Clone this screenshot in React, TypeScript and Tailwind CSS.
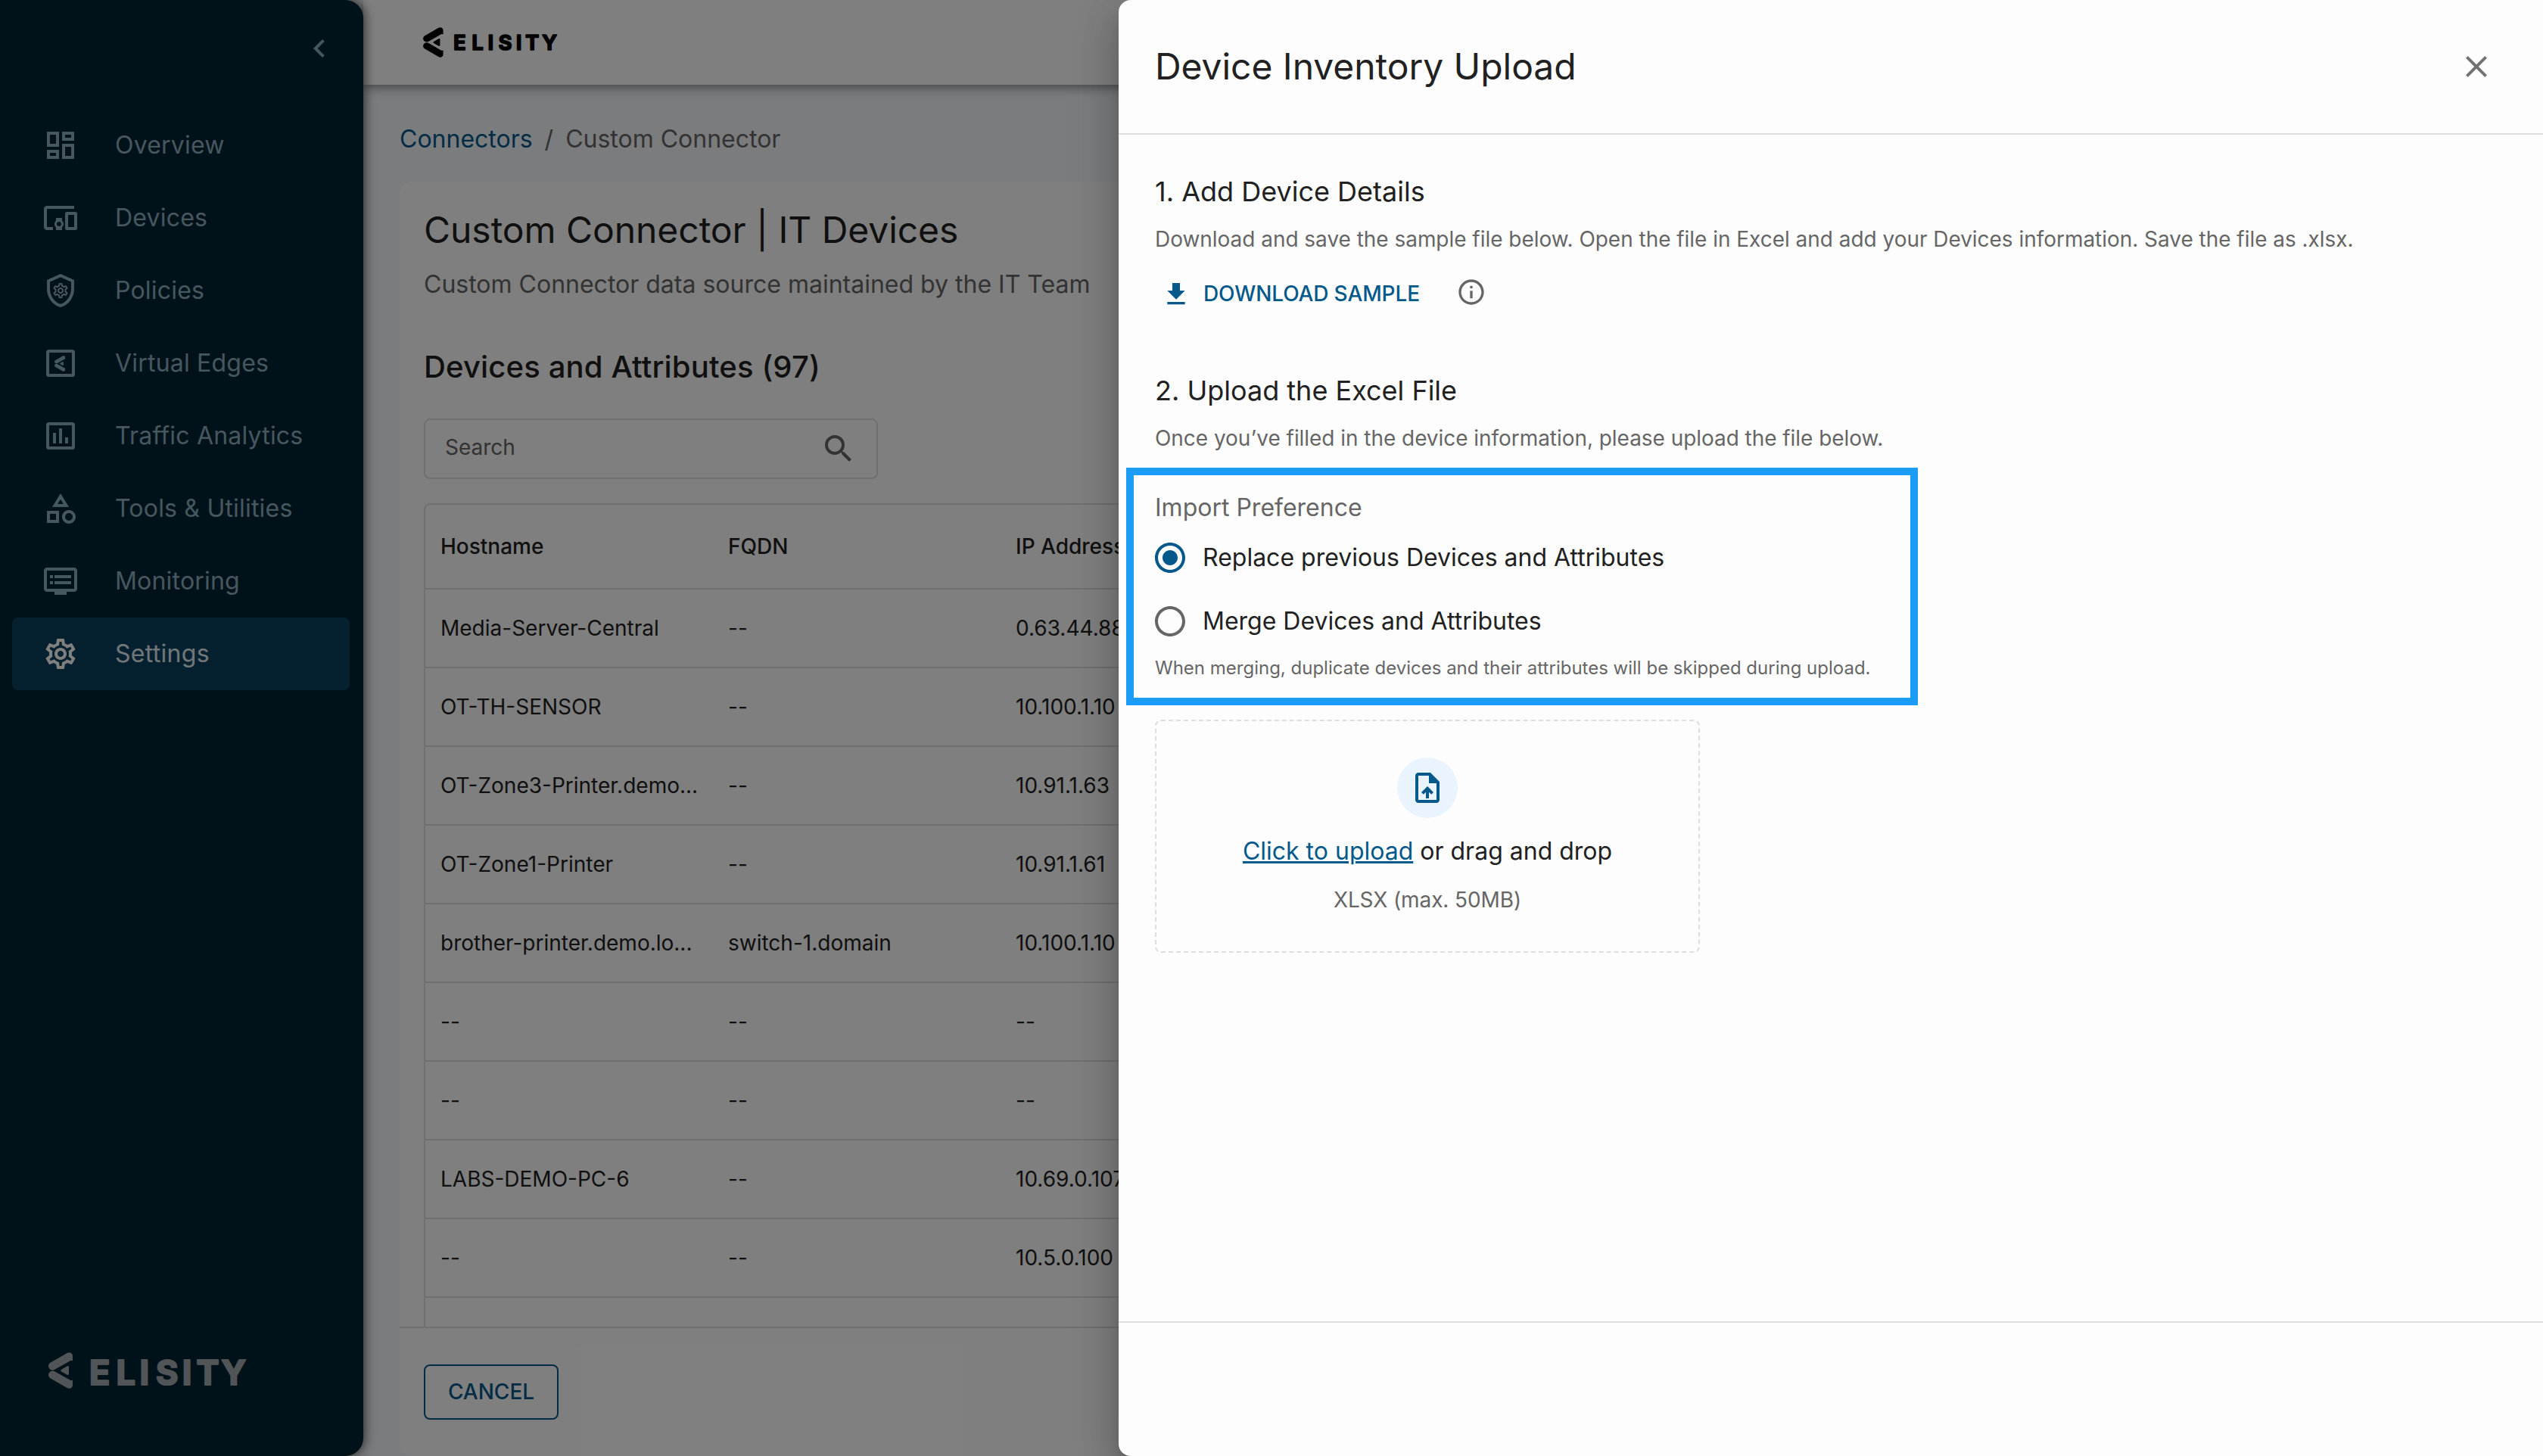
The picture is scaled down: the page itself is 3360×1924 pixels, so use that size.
import React from 'react';
import type { IconType } from 'react-icons';
import {
  MdChevronLeft,
  MdClose,
  MdDevicesOther,
  MdDownload,
  MdDvr,
  MdInfoOutline,
  MdOutlineCategory,
  MdOutlineSettings,
  MdRadioButtonChecked,
  MdRadioButtonUnchecked,
  MdSearch,
} from 'react-icons/md';

type IconProps = { className?: string };

const DashboardIcon = ({ className }: IconProps) => (
  <svg viewBox="0 0 24 24" fill="none" stroke="currentColor" strokeWidth="2" className={className}>
    <path d="M4 4h6v8H4zM14 4h6v4h-6zM14 12h6v8h-6zM4 16h6v4H4z" />
  </svg>
);

const PolicyIcon = ({ className }: IconProps) => (
  <svg viewBox="0 0 24 24" fill="currentColor" className={className}>
    <path d="M12 1L3 5v6c0 5.55 3.84 10.74 9 12 5.16-1.26 9-6.45 9-12V5l-9-4zm0 2.18l7 3.12v4.7c0 4.52-2.98 8.69-7 9.93-4.02-1.24-7-5.41-7-9.93V6.3l7-3.12z" />
    <g transform="translate(6 6) scale(0.5)">
      <path d="M19.43 12.98c.04-.32.07-.64.07-.98 0-.34-.03-.66-.07-.98l2.11-1.65c.19-.15.24-.42.12-.64l-2-3.46c-.09-.16-.26-.25-.44-.25-.06 0-.12.01-.17.03l-2.49 1c-.52-.4-1.08-.73-1.69-.98l-.38-2.65C14.46 2.18 14.25 2 14 2h-4c-.25 0-.46.18-.49.42l-.38 2.65c-.61.25-1.17.59-1.69.98l-2.49-1c-.06-.02-.12-.03-.18-.03-.17 0-.34.09-.43.25l-2 3.46c-.13.22-.07.49.12.64l2.11 1.65c-.04.32-.07.65-.07.98 0 .33.03.66.07.98l-2.11 1.65c-.19.15-.24.42-.12.64l2 3.46c.09.16.26.25.44.25.06 0 .12-.01.17-.03l2.49-1c.52.4 1.08.73 1.69.98l.38 2.65c.03.24.24.42.49.42h4c.25 0 .46-.18.49-.42l.38-2.65c.61-.25 1.17-.59 1.69-.98l2.49 1c.06.02.12.03.18.03.17 0 .34-.09.43-.25l2-3.46c.12-.22.07-.49-.12-.64l-2.11-1.65zm-1.98-1.71c.04.31.05.52.05.73 0 .21-.02.43-.05.73l-.14 1.13.89.7 1.08.84-.7 1.21-1.27-.51-1.04-.42-.9.68c-.43.32-.84.56-1.25.73l-1.06.43-.16 1.13-.2 1.35h-1.4l-.19-1.35-.16-1.13-1.06-.43c-.43-.18-.83-.41-1.23-.71l-.91-.7-1.06.43-1.27.51-.7-1.21 1.08-.84.89-.7-.14-1.13c-.03-.31-.05-.54-.05-.74s.02-.43.05-.73l.14-1.13-.89-.7-1.08-.84.7-1.21 1.27.51 1.04.42.9-.68c.43-.32.84-.56 1.25-.73l1.06-.43.16-1.13.2-1.35h1.39l.19 1.35.16 1.13 1.06.43c.43.18.83.41 1.23.71l.91.7 1.06-.43 1.27-.51.7 1.21-1.07.85-.89.7.14 1.13zM12 8c-2.21 0-4 1.79-4 4s1.79 4 4 4 4-1.79 4-4-1.79-4-4-4zm0 6c-1.1 0-2-.9-2-2s.9-2 2-2 2 .9 2 2-.9 2-2 2z" />
    </g>
  </svg>
);

const EdgeIcon = ({ className }: IconProps) => (
  <svg viewBox="0 0 24 24" className={className}>
    <rect x="3.5" y="4" width="17" height="16" rx="0.8" fill="none" stroke="currentColor" strokeWidth="2" />
    <g transform="translate(8 7) scale(0.2188)" fill="currentColor">
      <MarkPaths />
    </g>
  </svg>
);

const AnalyticsIcon = ({ className }: IconProps) => (
  <svg viewBox="0 0 24 24" className={className}>
    <rect x="3.5" y="4" width="17" height="16" rx="0.8" fill="none" stroke="currentColor" strokeWidth="2" />
    <path d="M7 10h2v7H7zM11 7h2v10h-2zM15 13h2v4h-2z" fill="currentColor" />
  </svg>
);

const UploadFileIcon = ({ className }: IconProps) => (
  <svg viewBox="0 0 24 24" fill="currentColor" className={className}>
    <path d="M14 2H6c-1.1 0-1.99.9-1.99 2L4 20c0 1.1.89 2 1.99 2H18c1.1 0 2-.9 2-2V8l-6-6zm4 18H6V4h7v5h5v11zM8 15.01l1.41 1.41L11 14.84V19h2v-4.16l1.59 1.59L16 15.01 12.01 11 8 15.01z" />
  </svg>
);

// Brand mark, drawn on a 32x48 box
const MarkPaths = () => (
  <>
    <path d="M24.6 1C28 -1 32 1 32 5V11.5C31 10.6 30 10.5 28.8 11.2L8.8 22.6C6 24.2 2.6 23.5 0.9 20.9C-0.7 18.2 0 15.2 2.8 13.6Z" />
    <path d="M24.6 47C28 49 32 47 32 43V36.5C31 37.4 30 37.5 28.8 36.8L8.8 25.4C6 23.8 2.6 24.5 0.9 27.1C-0.7 29.8 0 32.8 2.8 34.4Z" />
    <path d="M17 22.8L24.8 18.3C26 17.7 27 18.3 27 19.5V28.5C27 29.7 26 30.3 24.8 29.7L17 25.2C15.9 24.5 15.9 23.5 17 22.8Z" />
  </>
);

const SidebarLogo = () => (
  <svg viewBox="0 0 280 48" className="h-12 w-[280px] overflow-visible text-[#a4aaae]" fill="currentColor">
    <MarkPaths />
    <text
      x="54 89.4 120.6 142 176.8 195.6 228.2"
      y="42.8"
      className="font-['Inter',sans-serif] text-[45px] font-bold"
      stroke="currentColor"
      strokeWidth="2.2"
      strokeLinejoin="round"
    >
      ELISITY
    </text>
  </svg>
);

const HeaderLogo = () => (
  <svg viewBox="0 0 180 40" className="h-10 w-[180px] overflow-visible text-black" fill="currentColor">
    <g transform="scale(0.83)">
      <MarkPaths />
    </g>
    <text
      x="40 64.2 85.4 99.4 122.8 135 157"
      y="30.2"
      className="font-['Inter',sans-serif] text-[27.5px] font-bold"
      stroke="currentColor"
      strokeWidth="1.5"
      strokeLinejoin="round"
    >
      ELISITY
    </text>
  </svg>
);

type NavItem = {
  label: string;
  icon: IconType | ((props: IconProps) => React.JSX.Element);
  active?: boolean;
};

const navItems: NavItem[] = [
  { label: 'Overview', icon: DashboardIcon },
  { label: 'Devices', icon: MdDevicesOther },
  { label: 'Policies', icon: PolicyIcon },
  { label: 'Virtual Edges', icon: EdgeIcon },
  { label: 'Traffic Analytics', icon: AnalyticsIcon },
  { label: 'Tools & Utilities', icon: MdOutlineCategory },
  { label: 'Monitoring', icon: MdDvr },
  { label: 'Settings', icon: MdOutlineSettings, active: true },
];

const rows = [
  ['Media-Server-Central', '--', '0.63.44.88'],
  ['OT-TH-SENSOR', '--', '10.100.1.10'],
  ['OT-Zone3-Printer.demo...', '--', '10.91.1.63'],
  ['OT-Zone1-Printer', '--', '10.91.1.61'],
  ['brother-printer.demo.lo...', 'switch-1.domain', '10.100.1.10'],
  ['--', '--', '--'],
  ['--', '--', '--'],
  ['LABS-DEMO-PC-6', '--', '10.69.0.107'],
  ['--', '--', '10.5.0.100'],
];

const Sidebar = () => (
  <aside className="relative z-20 flex w-[480px] shrink-0 flex-col rounded-r-3xl bg-[#002432] text-[#8eaebe] shadow-[0_0_16px_rgba(0,0,0,0.8)]">
    <div className="flex h-36 justify-end pt-10 pr-[34px]">
      <MdChevronLeft className="size-12" />
    </div>
    <nav className="mr-[18px] ml-4">
      {navItems.map(({ label, icon: Icon, active }) => (
        <div
          key={label}
          className={
            active
              ? 'flex h-24 items-center gap-12 rounded-lg bg-[#0a425e] pl-10'
              : 'flex h-24 items-center gap-12 pl-10'
          }
        >
          <Icon className={active ? 'size-12 text-white' : 'size-12'} />
          <span className={active ? 'text-[32px] tracking-[0.3px] text-[#e2ecf0]' : 'text-[32px] tracking-[0.2px]'}>
            {label}
          </span>
        </div>
      ))}
    </nav>
    <div className="mt-auto pb-[89px] pl-16">
      <SidebarLogo />
    </div>
  </aside>
);

const DeviceTable = () => (
  <div className="mt-8 rounded-t-lg border-2 border-b-0 border-[#e0e0e0] text-[28px]">
    <div className="flex h-28 items-center border-b-2 border-[#e0e0e0] pl-5 font-medium">
      <div className="w-[380px]">Hostname</div>
      <div className="w-[380px]">FQDN</div>
      <div className="w-[380px]">IP Address</div>
    </div>
    {rows.map(([hostname, fqdn, ip], i) => (
      <div key={i} className="flex h-[104px] items-center border-b-2 border-[#e0e0e0] pl-5">
        <div className="w-[380px]">{hostname}</div>
        <div className="w-[380px]">{fqdn}</div>
        <div className="w-[380px]">{ip}</div>
      </div>
    ))}
    <div className="h-[104px]" />
  </div>
);

const ConnectorPage = () => (
  <div className="flex min-w-0 flex-1 flex-col">
    <header className="relative z-10 flex h-28 shrink-0 items-start bg-white pt-9 pl-[79px] shadow-[0_4px_8px_-2px_rgba(0,0,0,0.2),0_8px_10px_0_rgba(0,0,0,0.14),0_2px_20px_0_rgba(0,0,0,0.12)]">
      <HeaderLogo />
    </header>
    <div className="flex h-32 shrink-0 items-center gap-4 pt-4 pl-12 text-[32px] text-[#666]">
      <span className="text-[#04598a]">Connectors</span>
      <span>/</span>
      <span>Custom Connector</span>
    </div>
    <div className="mx-12 flex min-h-0 flex-1 flex-col rounded-2xl bg-white">
      <div className="min-h-0 flex-1 overflow-hidden px-8 pt-8">
        <h1 className="text-[48px] leading-[64px] tracking-[-0.05px]">Custom Connector | IT Devices</h1>
        <p className="mt-4 text-[32px] leading-[48px] text-[#666]">
          Custom Connector data source maintained by the IT Team
        </p>
        <h2 className="mt-[57px] text-[40px] leading-[56px] font-medium tracking-[0.15px]">
          Devices and Attributes (97)
        </h2>
        <div className="mt-10 flex h-20 w-[600px] items-center justify-between rounded-lg border-2 border-[#e0e0e0] pr-[26px] pl-[26px] text-[#666]">
          <span className="pb-1 text-[28px]">Search</span>
          <MdSearch className="size-12" />
        </div>
        <DeviceTable />
      </div>
      <div className="h-[171px] shrink-0 border-t-2 border-[#e0e0e0] px-8 pt-12">
        <button className="h-[73px] w-[178px] rounded-lg border-2 border-[#04598a] pb-0.5 text-[28px] font-medium text-[#04598a]">
          CANCEL
        </button>
      </div>
    </div>
  </div>
);

const UploadDrawer = () => (
  <div className="absolute inset-y-0 right-0 z-40 flex w-[1882px] flex-col rounded-l-2xl bg-[#fdfdfd] shadow-[0_16px_20px_-10px_rgba(0,0,0,0.2),0_32px_48px_4px_rgba(0,0,0,0.14),0_12px_60px_10px_rgba(0,0,0,0.12)]">
    <div className="flex h-[178px] shrink-0 items-center justify-between border-b-2 border-[#dedede] pr-16 pl-12">
      <h2 className="text-[48px] tracking-[-0.05px]">Device Inventory Upload</h2>
      <MdClose className="size-12 text-[#737373]" />
    </div>

    <div className="flex-1 px-12 pt-12">
      {/* Step 1 */}
      <h3 className="text-[36px] leading-[54px]">1. Add Device Details</h3>
      <p className="mt-4 text-[28px] leading-10 tracking-[-0.035px] text-[#666]">
        Download and save the sample file below. Open the file in Excel and add your Devices information. Save the
        file as .xlsx.
      </p>
      <div className="mt-8 flex h-10 items-center pl-2">
        <MdDownload className="mt-0.5 size-10 text-[#04598a]" />
        <span className="ml-4 w-[288px] text-[28px] font-medium tracking-[-0.12px] text-[#04598a]">
          DOWNLOAD SAMPLE
        </span>
        <MdInfoOutline className="mb-1 ml-[46px] size-10 text-[#666]" />
      </div>

      {/* Step 2 */}
      <h3 className="mt-[81px] text-[36px] leading-[54px]">2. Upload the Excel File</h3>
      <p className="mt-4 text-[28px] leading-10 tracking-[-0.05px] text-[#666]">
        Once you’ve filled in the device information, please upload the file below.
      </p>

      <div className="mt-[19px] -ml-[38px] h-[314px] w-[1046px] border-[10px] border-[#1b9cf6] px-7 pt-[19px]">
        <div className="text-[32px] leading-[48px] text-[#666]">Import Preference</div>
        <label className="mt-[18px] -ml-1 flex h-12 items-center gap-[19px] text-[32px]">
          <MdRadioButtonChecked className="size-12 text-[#04598a]" />
          Replace previous Devices and Attributes
        </label>
        <label className="mt-9 -ml-1 flex h-12 items-center gap-[19px] text-[32px]">
          <MdRadioButtonUnchecked className="size-12 text-[#666]" />
          Merge Devices and Attributes
        </label>
        <div className="mt-5 text-[24px] leading-9 text-[#666]">
          When merging, duplicate devices and their attributes will be skipped during upload.
        </div>
      </div>

      <div className="mt-[19px] flex h-[308px] w-[720px] flex-col items-center rounded-lg border-2 border-dashed border-[#dedede] pt-12">
        <div className="flex size-20 items-center justify-center rounded-full bg-[#e9f4ff]">
          <UploadFileIcon className="size-12 text-[#04598a]" />
        </div>
        <div className="mt-5 text-[32px] leading-[48px]">
          <span className="text-[#04598a] underline">Click to upload</span> or drag and drop
        </div>
        <div className="mt-5 text-[28px] leading-10 tracking-[-0.1px] text-[#666]">XLSX (max. 50MB)</div>
      </div>
    </div>

    <div className="h-[178px] shrink-0 border-t-2 border-[#dedede]" />
  </div>
);

export default function App() {
  return (
    <div className="relative flex h-screen w-full overflow-hidden bg-[#f6f8fc] font-['Inter',sans-serif] text-[#212121]">
      <Sidebar />
      <ConnectorPage />
      <div className="absolute inset-0 z-30 bg-black/50" />
      <UploadDrawer />
    </div>
  );
}
